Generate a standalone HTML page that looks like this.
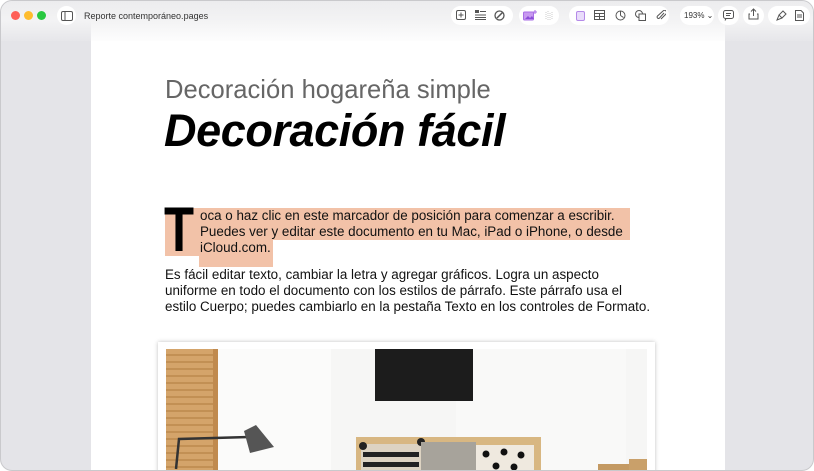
<!DOCTYPE html>
<html><head><meta charset="utf-8">
<style>
html,body{margin:0;padding:0;background:#fff;}
body{width:814px;height:471px;overflow:hidden;position:relative;font-family:"Liberation Sans",sans-serif;}
.win{position:absolute;left:0;top:0;width:812px;height:469px;border:1px solid #c9c9cc;border-radius:12px;overflow:hidden;background:#e4e4e8;}
.page{position:absolute;left:90px;top:0;width:634px;height:471px;background:#fff;}
.toolbar{position:absolute;left:0;top:0;width:100%;height:40px;background:linear-gradient(#ececee 0,#f3f3f4 20px,rgba(255,255,255,0) 44px);}
.dot{position:absolute;top:10px;width:9px;height:9px;border-radius:50%;}
.pill{position:absolute;top:5px;height:19px;background:#fff;border-radius:10px;}
.ic{position:absolute;top:9px;}
.t1{position:absolute;left:164px;top:75px;font-size:25.6px;color:#666;white-space:nowrap;}
.t2{position:absolute;left:163px;top:104px;font-size:45px;font-weight:bold;font-style:italic;letter-spacing:-0.4px;color:#000;white-space:nowrap;}
.hl{position:absolute;background:#f2c2a8;}
.txt{position:absolute;font-size:13.4px;color:#111;white-space:nowrap;line-height:16px;}
</style></head><body>
<div class="win">
 <div class="page"></div>
 <div class="toolbar"></div>
 <div class="dot" style="left:10px;background:#fe5f57"></div>
 <div class="dot" style="left:23px;background:#febc2e"></div>
 <div class="dot" style="left:36px;background:#28c840"></div>
 <div class="pill" style="left:56px;width:19px;"></div>
 <svg class="ic" style="left:60px;top:10px" width="12" height="10"><rect x="0.5" y="0.5" width="11" height="9" rx="1.5" fill="none" stroke="#555"/><line x1="4" y1="1" x2="4" y2="9" stroke="#555"/></svg>
 <div style="position:absolute;left:83px;top:10px;font-size:9px;color:#333;">Reporte contemporáneo.pages</div>

 <div class="pill" style="left:450px;width:62px;"></div>
 <svg class="ic" style="left:455px" width="10" height="10"><rect x="0.5" y="0.5" width="9" height="9" rx="1.5" fill="none" stroke="#555"/><path d="M5 2.5v5M2.5 5h5" stroke="#555"/></svg>
 <svg class="ic" style="left:474px" width="11" height="10"><rect x="0" y="0" width="4" height="3" fill="#555"/><path d="M5 1.5h6M0 5h11M0 7.5h11M0 9.5h11" stroke="#555"/></svg>
 <svg class="ic" style="left:493px" width="11" height="11"><circle cx="5.5" cy="5.5" r="4.5" fill="none" stroke="#555" stroke-width="1.3"/><path d="M3 8l6-6" stroke="#555" stroke-width="1.5"/></svg>
 <div class="pill" style="left:518px;width:40px;"></div>
 <svg class="ic" style="left:522px" width="14" height="11"><rect x="0.5" y="2" width="10" height="8" rx="1" fill="#c89af0" stroke="#a96ee6"/><path d="M2 9l3-3 2 2 2-2 2 3z" fill="#8b4ed8"/><path d="M12 0v4M10 2h4" stroke="#a96ee6"/></svg>
 <svg class="ic" style="left:544px" width="9" height="10"><path d="M1 2v8M3 1v9M5 3v7M7 2v8" stroke="#ccc" stroke-dasharray="1 1"/></svg>
 <div class="pill" style="left:568px;width:100px;"></div>
 <svg class="ic" style="left:575px" width="9" height="11"><rect x="0.5" y="1.5" width="8" height="9" rx="1.5" fill="#e9dcfb" stroke="#b58ae8"/></svg>
 <svg class="ic" style="left:593px" width="11" height="10"><rect x="0.5" y="0.5" width="10" height="9" fill="none" stroke="#555"/><path d="M0 3.5h11M0 6.5h11M5.5 3.5v6" stroke="#555"/></svg>
 <svg class="ic" style="left:614px" width="11" height="11"><circle cx="5.5" cy="5.5" r="4.5" fill="none" stroke="#555"/><path d="M5.5 5.5V1.5M5.5 5.5l3 2" stroke="#555"/></svg>
 <svg class="ic" style="left:634px" width="11" height="11"><circle cx="4" cy="4" r="3.5" fill="none" stroke="#555"/><rect x="4" y="4" width="6.5" height="6.5" fill="#fff" stroke="#555"/></svg>
 <svg class="ic" style="left:655px" width="10" height="11"><path d="M8 3L3.5 8a1.3 1.3 0 0 1-2-2L7 1a2 2 0 0 1 3 3L5 9" fill="none" stroke="#555"/></svg>
 <div class="pill" style="left:679px;width:34px;"></div>
 <div style="position:absolute;left:683px;top:10px;font-size:8px;color:#333;">193% ⌄</div>
 <div class="pill" style="left:717px;width:21px;"></div>
 <svg class="ic" style="left:722px" width="11" height="11"><rect x="0.5" y="0.5" width="10" height="8" rx="2" fill="none" stroke="#555"/><path d="M3 3.5h5M3 5.5h4M3 8.5l-1 2" stroke="#555"/></svg>
 <div class="pill" style="left:742px;width:21px;"></div>
 <svg class="ic" style="left:747px;top:7px" width="11" height="12"><path d="M5.5 1v7M3 3.5l2.5-2.5 2.5 2.5M2 6H1v5h9V6H9" fill="none" stroke="#555"/></svg>
 <div class="pill" style="left:767px;width:42px;"></div>
 <svg class="ic" style="left:775px" width="11" height="11"><path d="M7 1l3 3-4 4-3-3zM3 5L1 10l5-2" fill="none" stroke="#555"/></svg>
 <svg class="ic" style="left:794px" width="9" height="11"><path d="M0.5 0.5h5.5l2.5 2.5v7.5h-8z" fill="none" stroke="#555"/><path d="M2 5h5M2 7h5" stroke="#555"/></svg>

 <div class="t1">Decoración hogareña simple</div>
 <div class="t2">Decoración fácil</div>

 <div class="hl" style="left:164px;top:207px;width:34px;height:48px"></div>
 <div class="hl" style="left:198px;top:207px;width:431px;height:32px"></div>
 <div class="hl" style="left:198px;top:239px;width:74px;height:27px"></div>
 <div style="position:absolute;left:163px;top:198px;font-size:63px;font-weight:bold;line-height:63px;color:#000;transform:scaleX(0.78);transform-origin:left;">T</div>
 <div class="txt" style="left:199px;top:207px;">oca o haz clic en este marcador de posición para comenzar a escribir.</div>
 <div class="txt" style="left:199px;top:223px;">Puedes ver y editar este documento en tu Mac, iPad o iPhone, o desde</div>
 <div class="txt" style="left:199px;top:239px;">iCloud.com.</div>
 <div class="txt" style="left:164px;top:266px;">Es fácil editar texto, cambiar la letra y agregar gráficos. Logra un aspecto</div>
 <div class="txt" style="left:164px;top:282px;">uniforme en todo el documento con los estilos de párrafo. Este párrafo usa el</div>
 <div class="txt" style="left:164px;top:298px;">estilo Cuerpo; puedes cambiarlo en la pestaña Texto en los controles de Formato.</div>

 <div style="position:absolute;left:157px;top:341px;width:497px;height:140px;background:#fff;box-shadow:0 0 4px rgba(0,0,0,0.25);"></div>
 <svg style="position:absolute;left:165px;top:348px" width="481" height="125">
  <rect width="481" height="125" fill="#f6f6f5"/>
  <rect x="15" width="150" height="125" fill="#fbfbfa"/>
  <rect x="290" width="170" height="125" fill="#f9f9f8"/>
  <rect x="0" width="52" height="125" fill="#d4a46a"/>
  <g stroke="#b88548" stroke-width="1.2">
   <line x1="0" y1="6" x2="47" y2="6"/><line x1="0" y1="13" x2="47" y2="13"/><line x1="0" y1="20" x2="47" y2="20"/><line x1="0" y1="27" x2="47" y2="27"/><line x1="0" y1="34" x2="47" y2="34"/><line x1="0" y1="41" x2="47" y2="41"/><line x1="0" y1="48" x2="47" y2="48"/><line x1="0" y1="55" x2="47" y2="55"/><line x1="0" y1="62" x2="47" y2="62"/><line x1="0" y1="69" x2="47" y2="69"/><line x1="0" y1="76" x2="47" y2="76"/><line x1="0" y1="83" x2="47" y2="83"/><line x1="0" y1="90" x2="47" y2="90"/><line x1="0" y1="97" x2="47" y2="97"/><line x1="0" y1="104" x2="47" y2="104"/><line x1="0" y1="111" x2="47" y2="111"/><line x1="0" y1="118" x2="47" y2="118"/>
  </g>
  <rect x="47" width="5" height="125" fill="#c08a4e"/>
  <rect x="209" y="0" width="98" height="52" fill="#1c1c1c"/>
  <path d="M10 120l3-30 70-2" stroke="#333" stroke-width="2.5" fill="none"/>
  <path d="M78 82l12-6 18 22-24 6z" fill="#555"/>
  <rect x="190" y="88" width="185" height="37" fill="#d8b782"/>
  <rect x="195" y="95" width="60" height="30" fill="#ddd3c2"/>
  <rect x="197" y="103" width="56" height="5" fill="#222"/>
  <rect x="197" y="113" width="56" height="5" fill="#222"/>
  <circle cx="197" cy="97" r="4" fill="#222"/><circle cx="255" cy="93" r="4" fill="#222"/>
  <rect x="255" y="93" width="55" height="32" fill="#a7a39b"/>
  <rect x="310" y="96" width="58" height="29" fill="#efe9df"/>
  <circle cx="320" cy="105" r="3.5" fill="#111"/><circle cx="338" cy="103" r="3.5" fill="#111"/><circle cx="355" cy="106" r="3.5" fill="#111"/><circle cx="330" cy="117" r="3.5" fill="#111"/><circle cx="348" cy="118" r="3.5" fill="#111"/>
  <path d="M432 125v-10h42v10z" fill="#c49a63"/>
  <rect x="463" y="110" width="18" height="15" fill="#c9a06a"/>
 </svg>
</div>
</body></html>
